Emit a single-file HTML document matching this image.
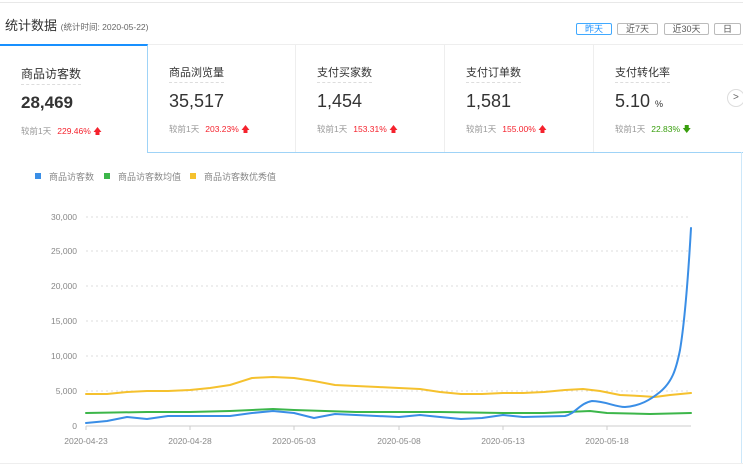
<!DOCTYPE html>
<html><head><meta charset="utf-8"><style>
*{margin:0;padding:0;box-sizing:border-box}
body{width:743px;height:464px;background:#fff;font-family:"Liberation Sans","Noto Sans CJK SC",sans-serif;position:relative;overflow:hidden;color:#333}
.abs{position:absolute}
.btn{position:absolute;top:23px;height:12px;border:1px solid #bbb;border-radius:2px;font-size:9px;line-height:10px;text-align:center;color:#555}
.card{position:absolute;top:44px;height:108px;border-right:1px solid #eee}
.lab{position:absolute;left:21px;top:20px;font-size:11px;color:#333;border-bottom:1px dashed #ddd;padding-bottom:2px}
.num{position:absolute;left:21px;top:47px;font-size:18px;color:#333}
.cmp{position:absolute;left:21px;top:79px;font-size:8.5px;color:#999;white-space:nowrap}
.r{color:#f5222d;margin-left:6px}
.g{color:#389e0d;margin-left:6px}
</style></head><body>
<div class="abs" style="left:0;top:2px;width:743px;height:1px;background:#e8e8e8"></div>
<div class="abs" style="left:5px;top:15px;font-size:13px;color:#333">统计数据 <span style="font-size:8.5px;color:#666">(统计时间: 2020-05-22)</span></div>
<div class="btn" style="left:576px;width:36px;border-color:#40a9ff;color:#1890ff">昨天</div>
<div class="btn" style="left:617px;width:41px">近7天</div>
<div class="btn" style="left:664px;width:45px">近30天</div>
<div class="btn" style="left:714px;width:27px">日</div>
<div class="abs" style="left:0;top:44px;width:743px;height:1px;background:#eee"></div>
<div class="card" style="left:0;width:148px;border:1px solid #9fd3f7;border-top:2px solid #1890ff;border-left:none;border-bottom:none;background:#fff;height:109px">
<div class="lab" style="font-size:12px;top:19px">商品访客数</div><div class="num" style="font-weight:bold;font-size:17px">28,469</div><div class="cmp">较前1天<span class="r">229.46% 🡅</span></div></div>
<div class="card" style="left:148px;width:148px"><div class="lab">商品浏览量</div><div class="num">35,517</div><div class="cmp">较前1天<span class="r">203.23% 🡅</span></div></div>
<div class="card" style="left:296px;width:149px"><div class="lab">支付买家数</div><div class="num">1,454</div><div class="cmp">较前1天<span class="r">153.31% 🡅</span></div></div>
<div class="card" style="left:445px;width:149px"><div class="lab">支付订单数</div><div class="num">1,581</div><div class="cmp">较前1天<span class="r">155.00% 🡅</span></div></div>
<div class="card" style="left:594px;width:149px;border:none"><div class="lab">支付转化率</div><div class="num">5.10 <span style="font-size:9px">%</span></div><div class="cmp">较前1天<span class="g">22.83% 🡇</span></div></div>
<div class="abs" style="left:727px;top:89px;width:18px;height:18px;border:1px solid #ddd;border-radius:50%;font-size:10px;line-height:16px;padding-left:5px;color:#666;background:#fff">&gt;</div>
<div class="abs" style="left:148px;top:152px;width:595px;height:1px;background:#9fd3f7"></div>
<div class="abs" style="left:741px;top:152px;width:1px;height:312px;background:#cde8fa"></div>
<div class="abs" style="left:0;top:463px;width:743px;height:1px;background:#eee"></div>
<svg class="abs" style="left:0;top:0" width="743" height="464">
<g font-size="9" fill="#888" font-family="Liberation Sans,Noto Sans CJK SC,sans-serif">
<rect x="35" y="173" width="6" height="6" fill="#3a8ee6"/><text x="49" y="180">商品访客数</text>
<rect x="104" y="173" width="6" height="6" fill="#3cb64a"/><text x="118" y="180">商品访客数均值</text>
<rect x="190" y="173" width="6" height="6" fill="#f5c12e"/><text x="204" y="180">商品访客数优秀值</text>
<g text-anchor="end" font-size="8.5"><text x="77" y="220">30,000</text><text x="77" y="254">25,000</text><text x="77" y="289">20,000</text><text x="77" y="324">15,000</text><text x="77" y="359">10,000</text><text x="77" y="394">5,000</text><text x="77" y="429">0</text></g>
<g text-anchor="middle" font-size="8.5"><text x="86" y="444">2020-04-23</text><text x="190" y="444">2020-04-28</text><text x="294" y="444">2020-05-03</text><text x="399" y="444">2020-05-08</text><text x="503" y="444">2020-05-13</text><text x="607" y="444">2020-05-18</text></g>
</g>
<g stroke="#ddd" stroke-dasharray="2,3" stroke-width="1"><line x1="86" x2="691" y1="217" y2="217"/><line x1="86" x2="691" y1="251" y2="251"/><line x1="86" x2="691" y1="286" y2="286"/><line x1="86" x2="691" y1="321" y2="321"/><line x1="86" x2="691" y1="356" y2="356"/><line x1="86" x2="691" y1="391" y2="391"/></g>
<line x1="86" x2="691" y1="426" y2="426" stroke="#ddd" stroke-width="1.5"/>
<g stroke="#ccc"><line x1="86" x2="86" y1="426" y2="430"/><line x1="190" x2="190" y1="426" y2="430"/><line x1="294" x2="294" y1="426" y2="430"/><line x1="399" x2="399" y1="426" y2="430"/><line x1="503" x2="503" y1="426" y2="430"/><line x1="607" x2="607" y1="426" y2="430"/></g>
<g fill="none" stroke-width="2" stroke-linejoin="round" stroke-linecap="round">
<polyline stroke="#f5c12e" points="86,394 107,394 127,392 147,391 168,391 190,390 210,388 230,385 252,378 273,377 294,378 314,381 335,385 356,386 378,387 399,388 420,389 440,392 461,394 482,394 503,393 523,393 544,392 565,390 583,389 600,391 620,395 640,396 655,397 670,395 691,393"/>
<polyline stroke="#3cb64a" points="86,413 147,412 190,412 230,411 273,409 294,410 356,412 440,412 503,413 544,413 590,411 607,413 650,414 691,413"/>
<path stroke="#3a8ee6" d="M86,423 L107,421 L127,417 L147,419 L168,416 L190,416 L230,416 L252,413 L273,411 L294,413 L314,418 L335,414 L356,415 L399,417 L420,415 L440,417 L461,419 L482,418 L503,415 L523,417 L565,416 C575,414 580,403 592,401 C605,401 615,407 625,407 C640,406 650,400 660,392 C672,382 676,370 680,350 C685,320 688,280 691,228"/>
</g>
</svg>
</body></html>
